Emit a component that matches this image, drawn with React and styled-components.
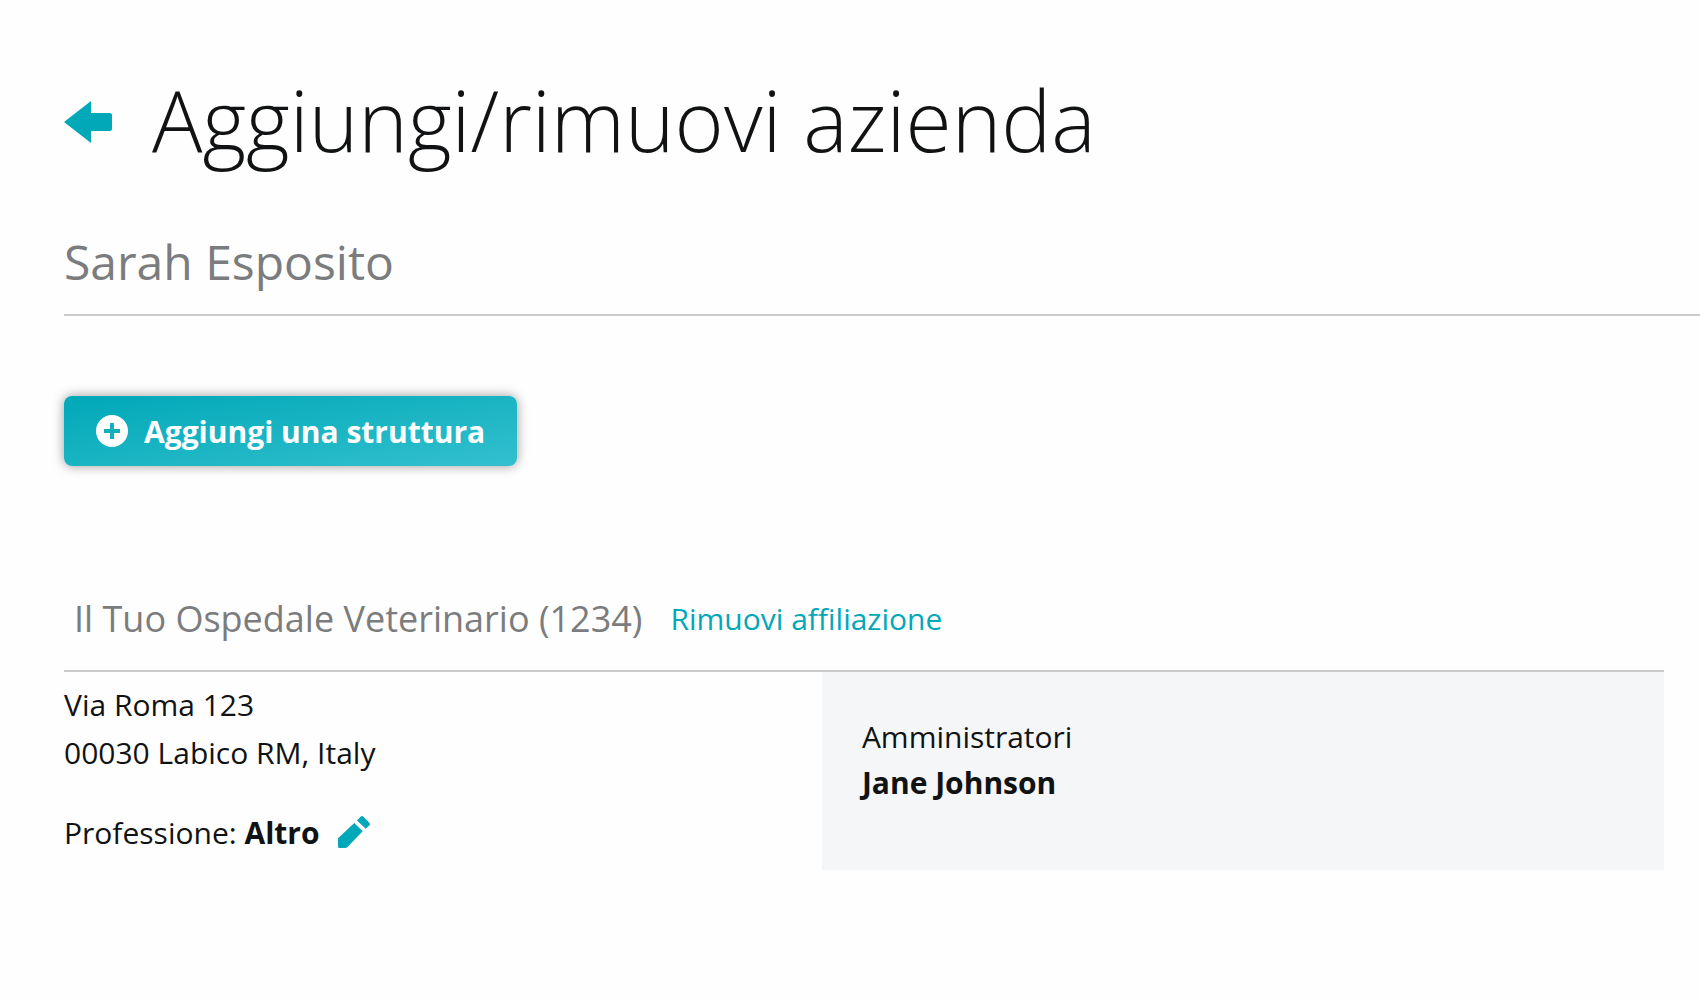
import styled, { createGlobalStyle } from 'styled-components';

const teal = '#00a8b8';
const ink = '#111213';
const grey = '#7b7c7d';

const GlobalStyle = createGlobalStyle`
  * {
    box-sizing: border-box;
  }

  body {
    margin: 0;
    background-color: #fefefe;
    color: ${ink};
    font-family: 'Open Sans', sans-serif;
    font-size: 30px;
    -webkit-font-smoothing: antialiased;
  }

  h1, h2, h3, p {
    margin: 0;
    font-weight: 400;
  }
`;

const StyledPage = styled.main`
  padding: 64px 0 64px 64px;
`;

const StyledTitleBar = styled.div`
  display: flex;
  align-items: center;
  gap: 40px;
`;

const StyledIconButton = styled.button`
  display: flex;
  padding: 0;
  border: 0;
  background: none;
  color: ${teal};
  cursor: pointer;
`;

const StyledTitle = styled.h1`
  && {
    font-weight: 300;
  }
  font-size: 84px;
  line-height: 112px;
`;

const StyledUserName = styled.h2`
  margin-top: 54px;
  padding-bottom: 20px;
  border-bottom: 2px solid #cccccc;
  color: ${grey};
  font-size: 48px;
  line-height: 64px;
`;

const StyledAddButton = styled.button`
  display: flex;
  align-items: center;
  gap: 16px;
  height: 70px;
  margin-top: 80px;
  padding: 0 32px;
  border: 0;
  border-radius: 8px;
  background: linear-gradient(to bottom right, ${teal}, #33c0ce);
  box-shadow: 0 0 12px rgba(0, 0, 0, 0.4);
  color: white;
  font-family: inherit;
  font-size: 30px;
  font-weight: 700;
  cursor: pointer;
`;

const StyledCompany = styled.section`
  margin: 128px 36px 0 0;
`;

const StyledCompanyHeader = styled.div`
  display: flex;
  align-items: center;
  gap: 28px;
  padding: 0 10px 26px;
  border-bottom: 2px solid #cccccc;
`;

const StyledCompanyName = styled.h3`
  color: ${grey};
  font-size: 36px;
  line-height: 50px;
`;

const StyledRemoveLink = styled.a`
  color: ${teal};
  line-height: 50px;
  text-decoration: none;
`;

const StyledCompanyBody = styled.div`
  display: grid;
  grid-template-columns: 9fr 10fr;
`;

const StyledDetails = styled.div`
  padding-top: 9px;
  line-height: 48px;
`;

const StyledProfession = styled.div`
  display: flex;
  align-items: center;
  gap: 18px;
  margin-top: 32px;
`;

const StyledAdmins = styled.div`
  padding: 42px 40px 64px;
  background-color: #f4f6f8;
  line-height: 46px;
`;

function ArrowLeft() {
  return (
    <svg width="48" height="46" viewBox="0 0 48 46" fill="currentColor">
      <path d="M0 25 27 4V16H46a2 2 0 0 1 2 2V32a2 2 0 0 1-2 2H27V46Z" />
    </svg>
  );
}

function PlusCircle() {
  return (
    <svg width="32" height="32" viewBox="0 0 32 32">
      <circle cx="16" cy="16" r="16" fill="white" />
      <path d="M14 8h4v6h6v4h-6v6h-4v-6H8v-4h6Z" fill="#13afbe" />
    </svg>
  );
}

function Pencil() {
  return (
    <svg width="32" height="34" viewBox="0 0 32 34" fill="currentColor">
      <path d="M0 22.300 16.300 7 24.700 15.300 9.500 31Q8.500 32 7 32H1.500Q0 32 0 30.500Z" />
      <path d="M19 4.500 22.800 0.600Q24.200 -0.500 25.500 0.800L31.300 6.800Q32.600 8.200 31.500 9.300L27.700 12.800Z" />
    </svg>
  );
}

function Company({ name, address, profession, admins }) {
  return (
    <StyledCompany>
      <StyledCompanyHeader>
        <StyledCompanyName>{name}</StyledCompanyName>
        <StyledRemoveLink href="#">Rimuovi affiliazione</StyledRemoveLink>
      </StyledCompanyHeader>
      <StyledCompanyBody>
        <StyledDetails>
          {address.map((line) => (
            <p key={line}>{line}</p>
          ))}
          <StyledProfession>
            <p>
              Professione: <strong>{profession}</strong>
            </p>
            <StyledIconButton type="button" aria-label="Modifica">
              <Pencil />
            </StyledIconButton>
          </StyledProfession>
        </StyledDetails>
        <StyledAdmins>
          <p>Amministratori</p>
          {admins.map((admin) => (
            <p key={admin}>
              <strong>{admin}</strong>
            </p>
          ))}
        </StyledAdmins>
      </StyledCompanyBody>
    </StyledCompany>
  );
}

function App() {
  return (
    <>
      <GlobalStyle />
      <StyledPage>
        <StyledTitleBar>
          <StyledIconButton type="button" aria-label="Indietro">
            <ArrowLeft />
          </StyledIconButton>
          <StyledTitle>Aggiungi/rimuovi azienda</StyledTitle>
        </StyledTitleBar>
        <StyledUserName>Sarah Esposito</StyledUserName>
        <StyledAddButton type="button">
          <PlusCircle />
          Aggiungi una struttura
        </StyledAddButton>
        <Company
          name="Il Tuo Ospedale Veterinario (1234)"
          address={['Via Roma 123', '00030 Labico RM, Italy']}
          profession="Altro"
          admins={['Jane Johnson']}
        />
      </StyledPage>
    </>
  );
}

export default App;
